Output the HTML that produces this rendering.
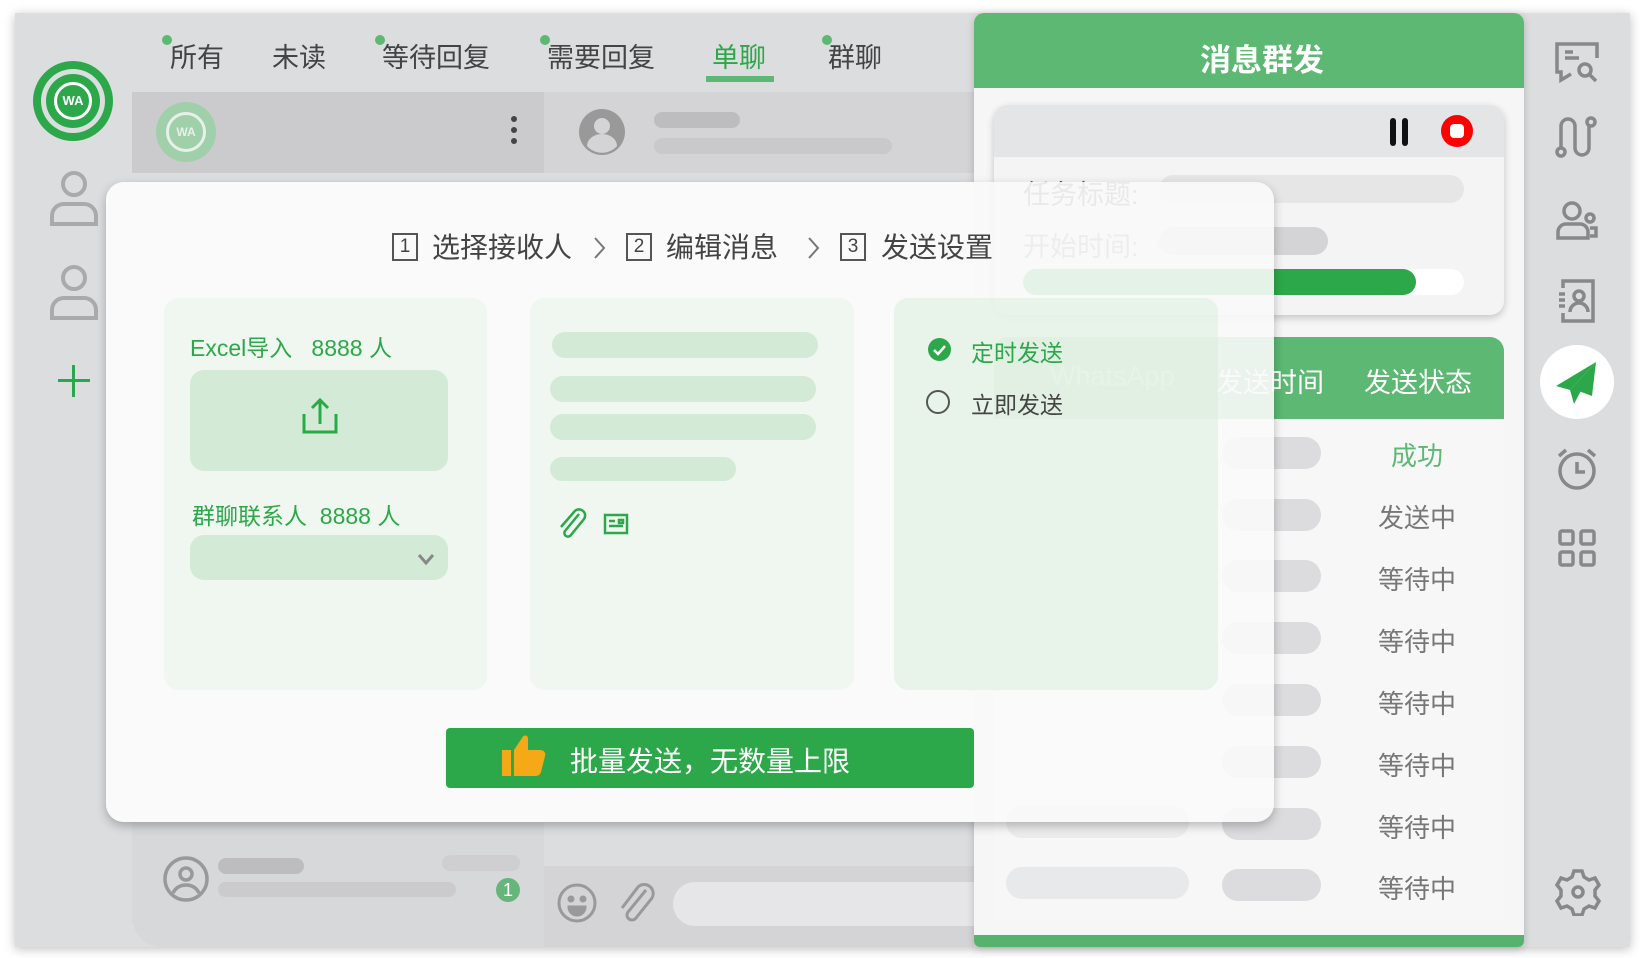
<!DOCTYPE html>
<html><head><meta charset="utf-8"><style>
*{margin:0;padding:0;box-sizing:border-box}
body{width:1640px;height:958px;background:#fff;position:relative;overflow:hidden;font-family:"Liberation Sans","Noto Sans CJK SC",sans-serif}
.a{position:absolute}
.pill{position:absolute;border-radius:16px}
.tab{position:absolute;top:36px;font-size:27px;color:#444}
.dot{position:absolute;width:10px;height:10px;border-radius:50%;background:#5cb872}
.st{position:absolute;font-size:26px;color:#777;width:120px;text-align:center;left:1357px}
.bx{position:absolute;top:233px;width:26px;height:28px;border:2px solid #555;font-size:19px;color:#444;text-align:center;line-height:24px}
.sx{position:absolute;top:226px;font-size:28px;color:#444;white-space:nowrap}
</style></head><body>
<div class="a" style="left:15px;top:13px;width:1615px;height:934px;background:#dcdddf;box-shadow:0 2px 10px rgba(0,0,0,.25)"></div>
<div class="a" style="left:33px;top:61px;width:80px;height:80px;border-radius:50%;background:#2ca84a"></div>
<div class="a" style="left:41px;top:69px;width:64px;height:64px;border-radius:50%;background:#dcdddf"></div>
<div class="a" style="left:46px;top:74px;width:54px;height:54px;border-radius:50%;background:#2ca84a"></div>
<div class="a" style="left:54px;top:82px;width:38px;height:38px;border-radius:50%;border:3px solid #fff;background:#2ca84a;color:#fff;font-size:13px;font-weight:bold;text-align:center;line-height:32px">WA</div>
<svg class="a" style="left:48px;top:168px" width="52" height="60" viewBox="0 0 52 60" fill="none" stroke="#aaa" stroke-width="4"><circle cx="26" cy="16" r="11"/><path d="M4 56v-8a12 12 0 0 1 12-12h20a12 12 0 0 1 12 12v8z"/></svg>
<svg class="a" style="left:48px;top:262px" width="52" height="60" viewBox="0 0 52 60" fill="none" stroke="#aaa" stroke-width="4"><circle cx="26" cy="16" r="11"/><path d="M4 56v-8a12 12 0 0 1 12-12h20a12 12 0 0 1 12 12v8z"/></svg>
<div class="a" style="left:58px;top:379px;width:32px;height:3px;background:#2ca84a"></div>
<div class="a" style="left:72px;top:365px;width:3px;height:32px;background:#2ca84a"></div>
<div class="dot" style="left:162px;top:35px"></div><div class="tab" style="left:170px">所有</div>
<div class="tab" style="left:272px">未读</div>
<div class="dot" style="left:375px;top:35px"></div><div class="tab" style="left:382px">等待回复</div>
<div class="dot" style="left:540px;top:35px"></div><div class="tab" style="left:547px">需要回复</div>
<div class="tab" style="left:712px;color:#2ca84a">单聊</div>
<div class="a" style="left:706px;top:76px;width:68px;height:6px;background:#5cb872"></div>
<div class="dot" style="left:822px;top:35px"></div><div class="tab" style="left:828px">群聊</div>
<div class="a" style="left:132px;top:92px;width:412px;height:81px;background:#cbcbcd"></div>
<div class="a" style="left:156px;top:102px;width:60px;height:60px;border-radius:50%;background:#9fd0a9"></div>
<div class="a" style="left:166px;top:112px;width:40px;height:40px;border-radius:50%;border:3px solid #e9efe9;color:#e9efe9;font-size:12px;font-weight:bold;text-align:center;line-height:34px">WA</div>
<div class="a" style="left:511px;top:116px;width:6px;height:6px;border-radius:50%;background:#444;box-shadow:0 11px 0 #444,0 22px 0 #444"></div>
<div class="a" style="left:544px;top:92px;width:430px;height:81px;background:#d4d4d6"></div>
<svg class="a" style="left:578px;top:108px" width="48" height="48" viewBox="0 0 48 48"><circle cx="24" cy="24" r="23" fill="#999"/><circle cx="24" cy="18" r="8" fill="#d4d4d6"/><path d="M9 38a15 12 0 0 1 30 0a20 20 0 0 1-30 0z" fill="#d4d4d6"/></svg>
<div class="pill" style="left:654px;top:112px;width:86px;height:16px;background:#bdbdbf"></div>
<div class="pill" style="left:654px;top:138px;width:238px;height:16px;background:#c9c9cb"></div>
<div class="a" style="left:132px;top:822px;width:412px;height:125px;background:#d7d8da;border-radius:0 0 0 30px"></div>
<svg class="a" style="left:162px;top:855px" width="48" height="48" viewBox="0 0 48 48" fill="none" stroke="#999" stroke-width="3.5"><circle cx="24" cy="24" r="21"/><circle cx="24" cy="19" r="6"/><path d="M11 38c3-6 8-8 13-8s10 2 13 8"/></svg>
<div class="pill" style="left:218px;top:858px;width:86px;height:16px;background:#bdbdbf"></div>
<div class="pill" style="left:218px;top:882px;width:238px;height:15px;background:#cbcbcd"></div>
<div class="pill" style="left:442px;top:855px;width:78px;height:16px;background:#cfcfd1"></div>
<div class="a" style="left:496px;top:878px;width:24px;height:24px;border-radius:50%;background:#67b57a;color:#fff;font-size:18px;text-align:center;line-height:24px">1</div>
<div class="a" style="left:544px;top:866px;width:430px;height:81px;background:#d4d4d6"></div>
<svg class="a" style="left:556px;top:882px" width="42" height="42" viewBox="0 0 42 42" fill="none" stroke="#999" stroke-width="3"><circle cx="21" cy="21" r="18"/><circle cx="15" cy="17" r="2" fill="#999"/><circle cx="27" cy="17" r="2" fill="#999"/><path d="M13 25h16a8 8 0 0 1-16 0z" fill="#999"/></svg>
<svg class="a" style="left:616px;top:880px" width="40" height="46" viewBox="0 0 40 46" fill="none" stroke="#999" stroke-width="3"><path d="M30 10L12 32a5 5 0 0 0 8 6L36 18a9 9 0 0 0-14-11L6 28"/></svg>
<div class="a" style="left:673px;top:882px;width:301px;height:44px;border-radius:22px 0 0 22px;background:#e6e6e8"></div>
<svg class="a" style="left:1553px;top:40px" width="48" height="46" viewBox="0 0 48 46" fill="none" stroke="#888" stroke-width="3.5"><path d="M44 18V4H4v28h4v8l10-6"/><path d="M12 12h8M12 18h14"/><circle cx="32" cy="30" r="6"/><path d="M37 35l6 6"/></svg>
<svg class="a" style="left:1555px;top:114px" width="44" height="46" viewBox="0 0 44 46" fill="none" stroke="#888" stroke-width="3.5"><circle cx="6" cy="38" r="4"/><circle cx="36" cy="8" r="4"/><path d="M6 34V12a7 7 0 0 1 14 0v22a7 7 0 0 0 14 0V12"/></svg>
<svg class="a" style="left:1555px;top:200px" width="46" height="42" viewBox="0 0 46 42" fill="none" stroke="#888" stroke-width="3.5"><circle cx="17" cy="11" r="8"/><path d="M3 38v-6a8 8 0 0 1 8-8h14a8 8 0 0 1 8 8v6z"/><circle cx="35" cy="18" r="4"/><path d="M35 28h6v8h-6"/></svg>
<svg class="a" style="left:1557px;top:278px" width="40" height="46" viewBox="0 0 40 46" fill="none" stroke="#888" stroke-width="3.5"><path d="M6 10V3h30v40H6v-8"/><path d="M2 16h6M2 22h6M2 28h6"/><circle cx="22" cy="18" r="5"/><path d="M13 34a9 9 0 0 1 18 0"/></svg>
<div class="a" style="left:1540px;top:345px;width:74px;height:74px;border-radius:50%;background:#fff"></div>
<svg class="a" style="left:1554px;top:358px" width="46" height="48" viewBox="0 0 46 48"><path d="M42 4L2 28l14 4z" fill="#2ca84a"/><path d="M42 4L16 32l4 14z" fill="#2ca84a"/><path d="M42 4L22 32l16 6z" fill="#2ca84a"/></svg>
<svg class="a" style="left:1555px;top:446px" width="44" height="46" viewBox="0 0 44 46" fill="none" stroke="#888" stroke-width="3.5"><circle cx="22" cy="25" r="17"/><path d="M22 16v10h8M4 10l7-6M40 10l-7-6"/></svg>
<svg class="a" style="left:1557px;top:528px" width="40" height="40" viewBox="0 0 40 40" fill="none" stroke="#888" stroke-width="3.5"><rect x="3" y="3" width="13" height="13" rx="2"/><rect x="24" y="3" width="13" height="13" rx="2"/><rect x="3" y="24" width="13" height="13" rx="2"/><rect x="24" y="24" width="13" height="13" rx="2"/></svg>
<svg class="a" style="left:1554px;top:868px" width="48" height="48" viewBox="0 0 48 48" fill="none" stroke="#888" stroke-width="3.5"><path d="M20 3h8l2 6 5 3 6-2 4 7-4 5v6l4 5-4 7-6-2-5 3-2 6h-8l-2-6-5-3-6 2-4-7 4-5v-6l-4-5 4-7 6 2 5-3z"/><circle cx="24" cy="24" r="5"/></svg>
<div class="a" style="left:974px;top:13px;width:550px;height:934px;background:#f6f6f7;border-radius:10px 10px 6px 6px;box-shadow:0 2px 8px rgba(0,0,0,.2);overflow:hidden">
 <div class="a" style="left:0;top:0;width:550px;height:75px;background:#5cb872"></div>
 <div class="a" style="left:226px;top:22px;color:#fff;font-size:31px;font-weight:bold;white-space:nowrap">消息群发</div>
 <div class="a" style="left:0;bottom:0;width:550px;height:12px;background:#57b26d"></div>
</div>
<div class="a" style="left:994px;top:105px;width:510px;height:210px;background:#f4f4f5;border-radius:14px;box-shadow:0 3px 8px rgba(0,0,0,.2);overflow:hidden">
 <div class="a" style="left:0;top:0;width:510px;height:52px;background:#e4e5e6"></div>
 <div class="a" style="left:396px;top:13px;width:6px;height:28px;background:#111;border-radius:3px"></div>
 <div class="a" style="left:408px;top:13px;width:6px;height:28px;background:#111;border-radius:3px"></div>
 <div class="a" style="left:447px;top:10px;width:32px;height:32px;border-radius:50%;background:#f00"></div>
 <div class="a" style="left:456px;top:19px;width:14px;height:14px;border-radius:4px;background:#fff"></div>
 <div class="a" style="left:29px;top:68px;font-size:27px;color:#555">任务标题:</div>
 <div class="pill" style="left:165px;top:70px;width:305px;height:28px;background:#e6e6e7;border-radius:14px"></div>
 <div class="a" style="left:29px;top:120px;font-size:27px;color:#777">开始时间:</div>
 <div class="pill" style="left:165px;top:122px;width:169px;height:28px;background:#d4d4d6;border-radius:14px"></div>
 <div class="pill" style="left:29px;top:164px;width:441px;height:26px;background:#fff;border-radius:13px"></div>
 <div class="pill" style="left:29px;top:164px;width:393px;height:26px;background:#2ca84a;border-radius:13px"></div>
</div>
<div class="a" style="left:994px;top:337px;width:510px;height:583px;background:#f7f7f8;border-radius:14px 14px 0 0;overflow:hidden">
 <div class="a" style="left:0;top:0;width:510px;height:82px;background:#5cb872;color:#fff;font-size:27px">
  <span class="a" style="left:56px;top:24px;color:#ddeedd">WhatsApp</span><span class="a" style="left:222px;top:24px">发送时间</span><span class="a" style="left:370px;top:24px">发送状态</span>
 </div>
</div>
<div class="pill" style="left:1006px;top:867px;width:183px;height:32px;background:#e8e9ea"></div>
<div class="pill" style="left:1006px;top:806px;width:183px;height:32px;background:#ececed"></div>
<div class="pill" style="left:1222px;top:437px;width:99px;height:32px;background:#dcdcde"></div>
<div class="pill" style="left:1222px;top:499px;width:99px;height:32px;background:#dcdcde"></div>
<div class="pill" style="left:1222px;top:560px;width:99px;height:32px;background:#dcdcde"></div>
<div class="pill" style="left:1222px;top:622px;width:99px;height:32px;background:#dcdcde"></div>
<div class="pill" style="left:1222px;top:684px;width:99px;height:32px;background:#dcdcde"></div>
<div class="pill" style="left:1222px;top:746px;width:99px;height:32px;background:#dcdcde"></div>
<div class="pill" style="left:1222px;top:808px;width:99px;height:32px;background:#dcdcde"></div>
<div class="pill" style="left:1222px;top:869px;width:99px;height:32px;background:#dcdcde"></div>
<div class="st" style="top:436px;color:#5cb872">成功</div>
<div class="st" style="top:498px">发送中</div>
<div class="st" style="top:560px">等待中</div>
<div class="st" style="top:622px">等待中</div>
<div class="st" style="top:684px">等待中</div>
<div class="st" style="top:746px">等待中</div>
<div class="st" style="top:808px">等待中</div>
<div class="st" style="top:869px">等待中</div>
<!-- modal -->
<div class="a" style="left:106px;top:182px;width:1168px;height:640px;background:rgba(250,250,250,.9);border-radius:18px;box-shadow:0 4px 10px rgba(0,0,0,.25)"></div>
<div class="a" style="left:106px;top:182px;width:868px;height:640px;background:rgba(250,250,250,.96);border-radius:18px 0 0 18px"></div>
<div class="bx" style="left:392px">1</div><div class="sx" style="left:432px">选择接收人</div>
<svg class="a" style="left:592px;top:236px" width="14" height="24" viewBox="0 0 14 24" fill="none" stroke="#777" stroke-width="2"><path d="M3 2l9 10-9 10"/></svg>
<div class="bx" style="left:626px">2</div><div class="sx" style="left:666px">编辑消息</div>
<svg class="a" style="left:806px;top:236px" width="14" height="24" viewBox="0 0 14 24" fill="none" stroke="#777" stroke-width="2"><path d="M3 2l9 10-9 10"/></svg>
<div class="bx" style="left:840px">3</div><div class="sx" style="left:881px">发送设置</div>
<div class="a" style="left:164px;top:298px;width:323px;height:392px;background:#f0f7f0;border-radius:14px"></div>
<div class="a" style="left:190px;top:329px;font-size:23px;color:#2ca84a;white-space:nowrap">Excel导入 &nbsp; 8888 人</div>
<div class="a" style="left:190px;top:370px;width:258px;height:101px;background:#d3ead6;border-radius:14px"></div>
<svg class="a" style="left:300px;top:396px" width="40" height="40" viewBox="0 0 40 40" fill="none" stroke="#2ca84a" stroke-width="3"><path d="M4 18v18h32V18M20 28V4M12 12l8-8 8 8"/></svg>
<div class="a" style="left:192px;top:497px;font-size:23px;color:#2ca84a;white-space:nowrap">群聊联系人 &nbsp;8888 人</div>
<div class="a" style="left:190px;top:535px;width:258px;height:45px;background:#d3ead6;border-radius:14px"></div>
<svg class="a" style="left:416px;top:552px" width="20" height="14" viewBox="0 0 20 14" fill="none" stroke="#888" stroke-width="3"><path d="M3 3l7 8 7-8"/></svg>
<div class="a" style="left:530px;top:298px;width:324px;height:392px;background:#f0f7f0;border-radius:14px"></div>
<div class="pill" style="left:552px;top:332px;width:266px;height:26px;background:#d3ead6;border-radius:13px"></div>
<div class="pill" style="left:550px;top:376px;width:266px;height:26px;background:#d3ead6;border-radius:13px"></div>
<div class="pill" style="left:550px;top:414px;width:266px;height:26px;background:#d3ead6;border-radius:13px"></div>
<div class="pill" style="left:550px;top:457px;width:186px;height:24px;background:#d3ead6;border-radius:12px"></div>
<svg class="a" style="left:557px;top:507px" width="30" height="32" viewBox="0 0 30 32" fill="none" stroke="#2ca84a" stroke-width="2.5"><path d="M22 7L8 24a3.5 3.5 0 0 0 6 4L27 12a6 6 0 0 0-10-7L4 20"/></svg>
<svg class="a" style="left:603px;top:513px" width="26" height="22" viewBox="0 0 26 22" fill="none" stroke="#2ca84a" stroke-width="2.5"><rect x="2" y="2" width="22" height="18"/><path d="M6 8h6M6 13h14M16 7h4v3h-4z"/></svg>
<div class="a" style="left:894px;top:298px;width:324px;height:392px;background:rgba(220,238,222,.6);border-radius:14px"></div>
<div class="a" style="left:928px;top:338px;width:23px;height:23px;border-radius:50%;background:#2ca84a"></div>
<svg class="a" style="left:931px;top:341px" width="17" height="17" viewBox="0 0 17 17" fill="none" stroke="#fff" stroke-width="2.5"><path d="M3 9l4 4 7-8"/></svg>
<div class="a" style="left:971px;top:334px;font-size:23px;color:#2ca84a">定时发送</div>
<div class="a" style="left:926px;top:390px;width:24px;height:24px;border-radius:50%;border:2px solid #555"></div>
<div class="a" style="left:971px;top:386px;font-size:23px;color:#444">立即发送</div>
<div class="a" style="left:446px;top:728px;width:528px;height:60px;background:#2ca84a;border-radius:4px"></div>
<svg class="a" style="left:500px;top:730px" width="48" height="48" viewBox="0 0 48 48"><rect x="2" y="20" width="9" height="26" fill="#f5a917"/><path d="M14 20l8-12c2-4 6-3 6 1v11h12c4 0 6 3 5 6l-4 16c-1 3-3 4-6 4H14z" fill="#f5a917"/></svg>
<div class="a" style="left:570px;top:740px;font-size:28px;color:#fff;white-space:nowrap">批量发送，无数量上限</div>
</body></html>
